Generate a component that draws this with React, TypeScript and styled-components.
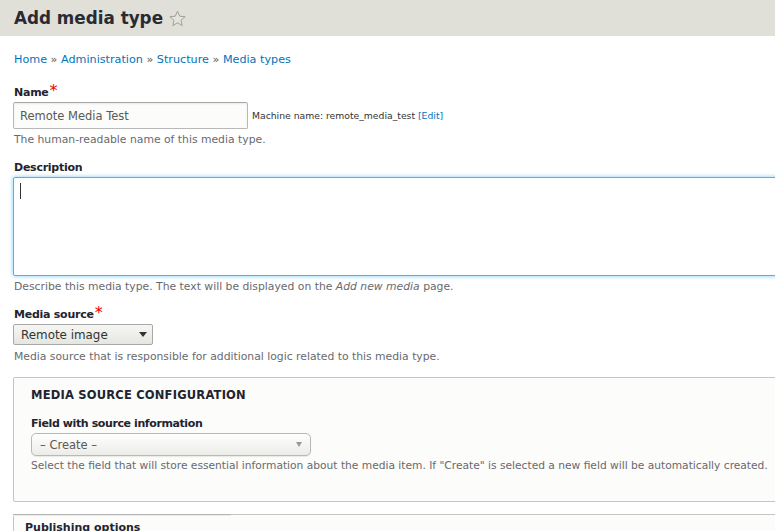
import React from 'react';
import styled, { createGlobalStyle } from 'styled-components';

const GlobalStyle = createGlobalStyle`
  html, body {
    margin: 0;
    height: 531px;
    overflow: hidden;
    background: #fff;
    font-family: "DejaVu Sans", Verdana, sans-serif;
    color: #333;
  }
`;

const Header = styled.header`
  height: 36px;
  background: #e0e0d8;
  display: flex;
  align-items: center;
  padding-left: 14px;
  gap: 6px;
`;

const Title = styled.h1`
  margin: 0;
  font-size: 16.8px;
  line-height: 36px;
  font-weight: 700;
  color: #2a2a33;
`;

const Content = styled.main`
  width: 800px;
  padding: 16px 0 0 13px;
  box-sizing: border-box;
`;

const Breadcrumb = styled.nav`
  font-size: 11.2px;
  line-height: 16px;
  color: #555;
  padding-left: 1px;
  margin-bottom: 17px;
`;

const Link = styled.a`
  color: #0074bd;
  text-decoration: none;
`;

const Item = styled.div`
  margin-bottom: 13px;
`;

const Label = styled.label`
  display: block;
  font-size: 11px;
  letter-spacing: -0.25px;
  line-height: 16px;
  font-weight: 700;
  color: #222330;
  padding-left: 1px;
  margin-bottom: 1px;
`;

const Required = styled.span`
  color: #e00;
  font-size: 16px;
  line-height: 10px;
  margin-left: 1px;
  font-weight: 400;
`;

const Row = styled.div`
  display: flex;
  align-items: center;
  gap: 4px;
`;

const TextInput = styled.input`
  width: 235px;
  height: 27px;
  box-sizing: border-box;
  border: 1px solid #b8b8b8;
  border-top-color: #a8a8a8;
  border-radius: 2px;
  background: #fcfcfa;
  box-shadow: inset 0 1px 2px rgba(0, 0, 0, 0.08);
  padding: 0 6px;
  font-family: inherit;
  font-size: 11.5px;
  color: #595959;
`;

const MachineName = styled.span`
  font-size: 9.25px;
  color: #333;
`;

const Help = styled.div`
  font-size: 10.8px;
  line-height: 14px;
  color: #68696f;
  padding-left: 1px;
  margin-top: 4px;
`;

const SourceHelp = styled(Help)`
  margin-top: 5px;
`;

const TextAreaWrap = styled.div`
  position: relative;
`;

const TextArea = styled.textarea`
  display: block;
  width: 100%;
  height: 99px;
  box-sizing: border-box;
  border: 1px solid #40b6ff;
  border-radius: 2px;
  box-shadow: 0 0 4px rgba(64, 182, 255, 0.7);
  background: #fff;
  outline: none;
  resize: none;
`;

const Caret = styled.span`
  position: absolute;
  left: 7px;
  top: 6px;
  width: 1px;
  height: 16px;
  background: #333;
`;

const SourceSelect = styled.div`
  width: 140px;
  height: 21px;
  box-sizing: border-box;
  border: 1px solid #a8a8a8;
  border-radius: 2px;
  background: linear-gradient(#f6f6f3, #e6e6e1);
  display: flex;
  align-items: center;
  justify-content: space-between;
  padding: 0 5px 0 7px;
  font-size: 11.9px;
  color: #333;
`;

const Arrow = styled.span<{ $light?: boolean }>`
  width: 0;
  height: 0;
  border-left: ${(p) => (p.$light ? 3 : 4)}px solid transparent;
  border-right: ${(p) => (p.$light ? 3 : 4)}px solid transparent;
  border-top: 5px solid ${(p) => (p.$light ? '#999' : '#333')};
`;

const Fieldset = styled.section`
  height: 125px;
  box-sizing: border-box;
  border: 1px solid #c4c4c4;
  border-radius: 2px;
  background: #fcfcfa;
  padding: 9px 17px;
  margin-bottom: 12px;
`;

const Legend = styled.h2`
  margin: 0 0 13px;
  font-size: 11.5px;
  line-height: 16px;
  font-weight: 700;
  letter-spacing: 0.2px;
  color: #222330;
`;

const FieldLabel = styled(Label)`
  padding-left: 0;
  margin-bottom: 1px;
  letter-spacing: -0.4px;
`;

const FieldSelect = styled.div`
  width: 280px;
  height: 23px;
  box-sizing: border-box;
  border: 1px solid #b8b8b8;
  border-radius: 5px;
  background: linear-gradient(#fff, #f4f4f2 55%, #ecece9);
  box-shadow: 0 1px 1px rgba(0, 0, 0, 0.08);
  display: flex;
  align-items: center;
  justify-content: space-between;
  padding: 0 8px;
  font-size: 11.5px;
  color: #595959;
`;

const FieldHelp = styled(Help)`
  padding-left: 0;
  font-size: 10.66px;
  margin-top: 3px;
`;

const Publishing = styled.section`
  position: relative;
  border: 1px solid #c4c4c4;
  border-radius: 2px;
  background: #fcfcfa;
  height: 60px;
  padding: 5px 11px;
`;

const PublishingEdge = styled.span`
  position: absolute;
  left: -1px;
  top: -1px;
  width: 218px;
  height: 2px;
  background: linear-gradient(#b4b4b4 50%, #ecece8 50%);
`;

const PublishingTab = styled.div`
  font-size: 11px;
  line-height: 16px;
  font-weight: 700;
  color: #222330;
`;

const StarIcon = () => (
  <svg width="17" height="17" viewBox="0 0 17 17">
    <path
      d="M8.5 1.2l2.2 5 5.4.5-4.1 3.6 1.2 5.3-4.7-2.8-4.7 2.8 1.2-5.3L.9 6.7l5.4-.5z"
      fill="#e4e4dc"
      stroke="#a0a094"
      strokeWidth="1"
    />
  </svg>
);

const App: React.FC = () => (
  <>
    <GlobalStyle />
    <Header>
      <Title>Add media type</Title>
      <StarIcon />
    </Header>
    <Content>
      <Breadcrumb>
        <Link href="#">Home</Link> » <Link href="#">Administration</Link> »{' '}
        <Link href="#">Structure</Link> » <Link href="#">Media types</Link>
      </Breadcrumb>

      <Item>
        <Label>
          Name<Required>*</Required>
        </Label>
        <Row>
          <TextInput defaultValue="Remote Media Test" />
          <MachineName>
            Machine name: remote_media_test <Link href="#">[Edit]</Link>
          </MachineName>
        </Row>
        <Help>The human-readable name of this media type.</Help>
      </Item>

      <Item>
        <Label>Description</Label>
        <TextAreaWrap>
          <TextArea />
          <Caret />
        </TextAreaWrap>
        <Help>
          Describe this media type. The text will be displayed on the <em>Add new media</em> page.
        </Help>
      </Item>

      <Item>
        <Label>
          Media source<Required>*</Required>
        </Label>
        <SourceSelect>
          Remote image
          <Arrow />
        </SourceSelect>
        <SourceHelp>Media source that is responsible for additional logic related to this media type.</SourceHelp>
      </Item>

      <Fieldset>
        <Legend>MEDIA SOURCE CONFIGURATION</Legend>
        <FieldLabel>Field with source information</FieldLabel>
        <FieldSelect>
          – Create –
          <Arrow $light />
        </FieldSelect>
        <FieldHelp>
          Select the field that will store essential information about the media item. If "Create" is selected a new
          field will be automatically created.
        </FieldHelp>
      </Fieldset>

      <Publishing>
        <PublishingEdge />
        <PublishingTab>Publishing options</PublishingTab>
      </Publishing>
    </Content>
  </>
);

export default App;
